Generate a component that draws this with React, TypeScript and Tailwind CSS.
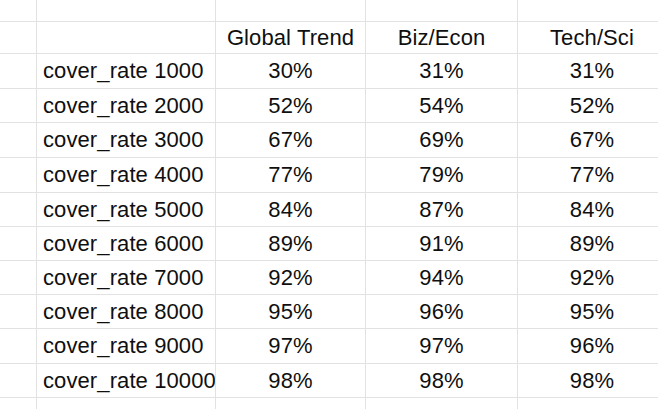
const rows = [
  ["cover_rate 1000", "30%", "31%", "31%"],
  ["cover_rate 2000", "52%", "54%", "52%"],
  ["cover_rate 3000", "67%", "69%", "67%"],
  ["cover_rate 4000", "77%", "79%", "77%"],
  ["cover_rate 5000", "84%", "87%", "84%"],
  ["cover_rate 6000", "89%", "91%", "89%"],
  ["cover_rate 7000", "92%", "94%", "92%"],
  ["cover_rate 8000", "95%", "96%", "95%"],
  ["cover_rate 9000", "97%", "97%", "96%"],
  ["cover_rate 10000", "98%", "98%", "98%"],
];

const Cell = ({ children, left }: { children?: React.ReactNode; left?: boolean }) => (
  <div
    className={`bg-white flex items-center overflow-hidden whitespace-nowrap ${
      left ? "justify-start pl-[6px]" : "justify-center"
    }`}
  >
    {children}
  </div>
);

const App = () => {
  const header = ["", "", "Global Trend", "Biz/Econ", "Tech/Sci"];
  return (
    <div className="w-[658px] h-[409px] overflow-hidden bg-white">
      <div
        className="grid grid-cols-[36px_178px_149px_151px_148px] grid-rows-[21px_31px_34px_33px_34px_34px_33px_33px_33px_33px_34px_33px_11px] gap-px bg-[#e2e2e2] w-[666px] text-[22px] leading-none text-[#0f0f0f] tracking-[0.1px]"
        style={{ fontFamily: '"Liberation Sans", Arial, sans-serif' }}
      >
        {header.map((_, i) => (
          <Cell key={`top-${i}`} />
        ))}
        {header.map((h, i) => (
          <Cell key={`h-${i}`}>{h}</Cell>
        ))}
        {rows.map((r) => (
          <>
            <Cell key={`${r[0]}-a`} />
            <Cell key={`${r[0]}-b`} left>
              {r[0]}
            </Cell>
            <Cell key={`${r[0]}-c`}>{r[1]}</Cell>
            <Cell key={`${r[0]}-d`}>{r[2]}</Cell>
            <Cell key={`${r[0]}-e`}>{r[3]}</Cell>
          </>
        ))}
        {header.map((_, i) => (
          <Cell key={`bot-${i}`} />
        ))}
      </div>
    </div>
  );
};

export default App;
